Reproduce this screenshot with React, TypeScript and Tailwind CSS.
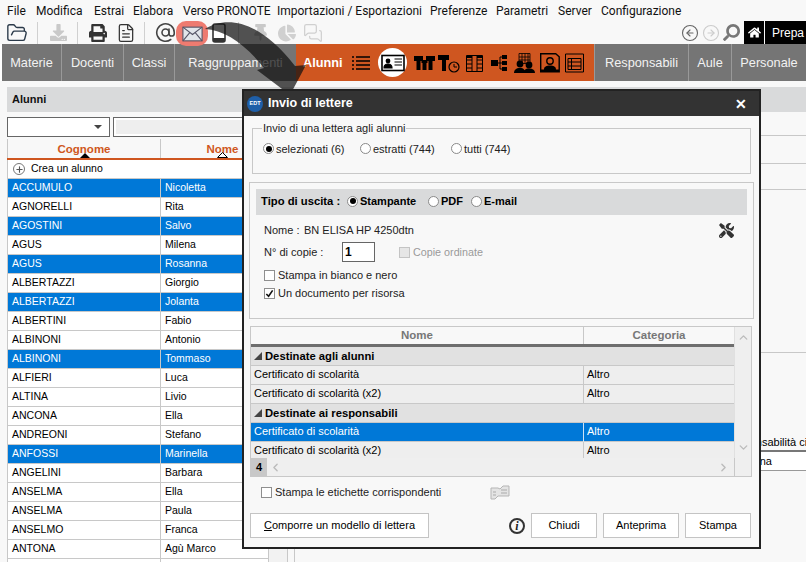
import { AtSign, ChevronDown, ChevronLeft, ChevronRight, ChevronUp, CircleArrowLeft, CircleArrowRight, FileText, FolderOpen, MessagesSquare, Plus } from "lucide-react";
import { FaChartPie, FaDownload, FaHome, FaPrint, FaSearch, FaThumbtack, FaTools } from "react-icons/fa";

const menus = [
  ["File", "w-[29px]"],
  ["Modifica", "w-[58px]"],
  ["Estrai", "w-[39px]"],
  ["Elabora", "w-[50px]"],
  ["Verso PRONOTE", "w-[94px]"],
  ["Importazioni / Esportazioni", "w-[153px]"],
  ["Preferenze", "w-[66px]"],
  ["Parametri", "w-[62px]"],
  ["Server", "w-[43px]"],
  ["Configurazione", "w-[90px]"],
];

const students = [
  ["ACCUMULO", "Nicoletta", true],
  ["AGNORELLI", "Rita", false],
  ["AGOSTINI", "Salvo", true],
  ["AGUS", "Milena", false],
  ["AGUS", "Rosanna", true],
  ["ALBERTAZZI", "Giorgio", false],
  ["ALBERTAZZI", "Jolanta", true],
  ["ALBERTINI", "Fabio", false],
  ["ALBINONI", "Antonio", false],
  ["ALBINONI", "Tommaso", true],
  ["ALFIERI", "Luca", false],
  ["ALTINA", "Livio", false],
  ["ANCONA", "Ella", false],
  ["ANDREONI", "Stefano", false],
  ["ANFOSSI", "Marinella", true],
  ["ANGELINI", "Barbara", false],
  ["ANSELMA", "Ella", false],
  ["ANSELMA", "Paula", false],
  ["ANSELMO", "Franca", false],
  ["ANTONA", "Agù Marco", false],
  ["", "", false],
] as const;

const Radio = ({ checked = false }: { checked?: boolean }) => (
  <span className="flex h-[11px] w-[11px] shrink-0 items-center justify-center rounded-full border border-[#8a8a8a] bg-white">
    {checked && <span className="h-[6px] w-[6px] rounded-full bg-black" />}
  </span>
);

const Check = ({ checked = false, disabled = false }: { checked?: boolean; disabled?: boolean }) => (
  <span className={`flex h-[11px] w-[11px] shrink-0 items-center justify-center border ${disabled ? "border-[#c4c4c4] bg-[#e6e6e6]" : "border-[#8f8f8f] bg-white"}`}>
    {checked && (
      <svg viewBox="0 0 10 10" className="h-[9px] w-[9px]">
        <path d="M1.5 5.5 L4 8 L8.5 1.5" fill="none" stroke="#111" strokeWidth="1.8" />
      </svg>
    )}
  </span>
);

const Sep = () => <span className="block h-[22px] w-px bg-[#d0d0d0]" />;

const TabIcon = ({ w, children }: { w: number; children: React.ReactNode }) => (
  <svg width={w} height="22" viewBox={`0 0 ${w} 22`} className="shrink-0">
    {children}
  </svg>
);

const OrangeIcons = () => (
  <div className="flex items-center">
    <TabIcon w={18}>
      <path d="M0 5h2M4 5h14M0 9h2M4 9h14M0 13h2M4 13h14M0 17h2M4 17h14" stroke="#000" strokeWidth="1.6" />
    </TabIcon>
    <span className="ml-[8px] flex h-[29px] w-[29px] items-center justify-center rounded-full bg-white">
      <svg width="24" height="18" viewBox="0 0 24 18">
        <rect x="1" y="1.5" width="22" height="15" fill="none" stroke="#000" strokeWidth="1.6" />
        <circle cx="7" cy="7" r="2.4" />
        <path d="M3 14c0-3 1.5-4 4-4s4 1 4 4zM13.5 5H21M13.5 8H21M13.5 11H21" stroke="#000" strokeWidth="1.2" />
      </svg>
    </span>
    <span className="ml-[7px]">
      <TabIcon w={21}>
        <path d="M0 4h9v5H6.5v9h-4V9H0zM12 4h9v5h-2.500v9h-4V9H12z" />
        <path d="M7.500 8h6v3h-1v7h-4v-7h-1z" />
      </TabIcon>
    </span>
    <span className="ml-[3px]">
      <TabIcon w={22}>
        <path d="M0 3h11v5H8v11H4V8H0z" />
        <circle cx="16" cy="15" r="5" fill="#cf5620" stroke="#000" strokeWidth="1.2" />
        <path d="M16 12v3h3" fill="none" stroke="#000" />
      </TabIcon>
    </span>
    <span className="ml-[6px]">
      <TabIcon w={17}>
        <path d="M.5 3.5h16v16H.5zM6 3.5v16M11 3.5v16M.5 8h5.500M.5 12h5.500M.5 16h5.500M11 8h5.500M11 12h5.500M11 16h5.500" fill="none" stroke="#000" />
        <path d="M1 3h5v3H1zM11 3h5v3h-5z" />
      </TabIcon>
    </span>
    <span className="ml-[8px]">
      <TabIcon w={17}>
        <path d="M0 8h7v6H0zM11 3h5v4h-5zM11 9h5v4h-5zM11 15h5v4h-5z" />
        <path d="M7 11h2M9 5v12M9 5h2M9 11h2M9 17h2" stroke="#000" fill="none" />
      </TabIcon>
    </span>
    <span className="ml-[6px]">
      <TabIcon w={21}>
        <path d="M5 1.500h11v10H5zM8 1.500v10M11 1.500v10M14 1.500v10M5 5h11M5 8h11" fill="none" stroke="#000" strokeWidth=".8" />
        <circle cx="6" cy="12" r="3.400" />
        <circle cx="15" cy="13" r="3.400" />
        <path d="M0 21c0-3 2-5 6-5s5 2 5 5zM10 21c0-3 1-4.500 5-4.500s6 1.500 6 4.500z" />
      </TabIcon>
    </span>
    <span className="ml-[5px]">
      <TabIcon w={20}>
        <path d="M.7 1.700h15l3.500 3v15H.7z" fill="none" stroke="#000" strokeWidth="1.400" />
        <circle cx="10" cy="9" r="3.200" fill="none" stroke="#000" strokeWidth="1.400" />
        <path d="M1 20v-2.500h18V20zM4 17.500c0-3 2.500-4 6-4s6 1 6 4z" />
      </TabIcon>
    </span>
    <span className="ml-[5px]">
      <TabIcon w={19}>
        <path d="M.5 2h18v18H.5zM3 6.500h13v11H3zM3 10h13M3 14h13M6.500 6.500v11" fill="none" stroke="#000" />
      </TabIcon>
    </span>
  </div>
);

const DialogButton = ({ label, className }: { label: React.ReactNode; className: string }) => (
  <button className={`flex h-[25px] items-center justify-center border border-[#c4c4c4] bg-white text-[11px] text-black ${className}`}>{label}</button>
);

const ModelRow = ({ name, selected = false }: { name: string; selected?: boolean }) => (
  <div className={`flex h-[19px] items-center border-b border-[#c8c8c8] pb-[2px] ${selected ? "bg-[#0078d7] text-white" : "bg-[#eeeeee] text-black"}`}>
    <span className="w-[332px] pl-[3px]">{name}</span>
    <span className={`-mb-[2px] flex h-[19px] flex-1 items-center border-l pb-[2px] pl-[3px] ${selected ? "border-[#cfe3f5]" : "border-[#c8c8c8]"}`}>Altro</span>
  </div>
);

const GroupRow = ({ name }: { name: string }) => (
  <div className="flex h-[19px] items-center border-b border-[#c8c8c8] bg-[#e1e1e1] pl-[3px] text-[11.250px] font-bold text-black">
    <span className="mr-[3px] h-0 w-0 border-b-[8px] border-l-[8px] border-b-[#444] border-l-transparent" />
    {name}
  </div>
);

const Dialog = () => (
  <div className="absolute left-[242px] top-[89px] flex h-[460px] w-[519px] flex-col border-2 border-[#222] bg-[#f8f8f8] text-[11px] text-[#222]">
    <div className="flex h-[25px] shrink-0 items-center bg-[#333333] pl-[3px] pr-[12px] text-white">
      <span className="flex h-[16px] w-[16px] items-center justify-center rounded-full bg-[#1f5fa8] text-[5.500px] font-bold">EDT</span>
      <span className="ml-[5px] flex-1 text-[12.500px] font-bold">Invio di lettere</span>
      <span className="text-[14px] font-bold leading-none">✕</span>
    </div>

    <fieldset className="mx-[8px] mt-[4px] h-[54px] shrink-0 border border-[#c8c8c8] pl-[10px]">
      <legend className="-ml-[1px] px-[1px]">Invio di una lettera agli alunni</legend>
      <div className="mt-[4px] flex items-center">
        <Radio checked />
        <span className="ml-[2px] w-[84px]">selezionati (6)</span>
        <Radio />
        <span className="ml-[2px] w-[78px]">estratti (744)</span>
        <Radio />
        <span className="ml-[2px]">tutti (744)</span>
      </div>
    </fieldset>

    <div className="mx-[5px] mt-[8px] h-[137px] shrink-0 border border-[#c8c8c8] px-[6px] pt-[6px]">
      <div className="flex h-[26px] items-center bg-[#d9dadb] pb-[2px] pl-[5px] font-bold text-black">
        <span className="w-[86px] text-[11.250px]">Tipo di uscita :</span>
        <Radio checked />
        <span className="ml-[2px] w-[68px]">Stampante</span>
        <Radio />
        <span className="ml-[2px] w-[30px]">PDF</span>
        <Radio />
        <span className="ml-[2px]">E-mail</span>
      </div>
      <div className="flex h-[27px] items-center justify-between pl-[8px] pr-[13px] pt-[4px]">
        <span className="flex">
          <span className="w-[40px]">Nome :</span>
          <span>BN ELISA HP 4250dtn</span>
        </span>
        <FaTools className="h-[15px] w-[15px] text-[#333]" />
      </div>
      <div className="flex h-[20px] items-center pl-[8px]">
        <span className="w-[78px]">N° di copie :</span>
        <span className="flex h-[20px] w-[33px] items-center border border-[#666] bg-white pl-[2px] text-[12px] font-bold text-black">1</span>
        <span className="ml-[24px]">
          <Check disabled />
        </span>
        <span className="ml-[3px] text-[10.750px] text-[#9a9a9a]">Copie ordinate</span>
      </div>
      <div className="mt-[7px] flex h-[13px] items-center pl-[8px]">
        <Check />
        <span className="ml-[3px]">Stampa in bianco e nero</span>
      </div>
      <div className="mt-[5px] flex h-[13px] items-center pl-[8px]">
        <Check checked />
        <span className="ml-[3px]">Un documento per risorsa</span>
      </div>
    </div>

    <div className="ml-[6px] mr-[7px] mt-[7px] flex h-[151px] shrink-0 flex-col border border-[#c8c8c8]">
      <div className="flex min-h-0 flex-1">
        <div className="flex-1">
          <div className="flex h-[20px] border-b-[3px] border-[#6e6e6e] bg-[#f8f8f8] text-[11.500px] font-bold text-[#777]">
            <span className="w-[332px] text-center">Nome</span>
            <span className="flex-1 border-l border-[#c8c8c8] text-center">Categoria</span>
          </div>
          <GroupRow name="Destinate agli alunni" />
          <ModelRow name="Certificato di scolarità" />
          <ModelRow name="Certificato di scolarità (x2)" />
          <GroupRow name="Destinate ai responsabili" />
          <ModelRow name="Certificato di scolarità" selected />
          <ModelRow name="Certificato di scolarità (x2)" />
        </div>
        <div className="flex w-[17px] flex-col items-center justify-between border-l border-[#e0e0e0] bg-[#efefef] py-[4px] text-[#bbb]">
          <ChevronUp size={13} strokeWidth={2.5} />
          <ChevronDown size={13} strokeWidth={2.5} />
        </div>
      </div>
      <div className="flex h-[18px] shrink-0 items-center bg-[#efefef] text-[#bbb]">
        <span className="flex h-full w-[16px] items-center justify-center bg-[#c8c8c8] font-bold text-black">4</span>
        <ChevronLeft size={13} strokeWidth={2.5} className="ml-[2px]" />
        <span className="flex-1" />
        <ChevronRight size={13} strokeWidth={2.5} className="mr-[4px]" />
        <span className="h-full w-[17px] border-l border-[#c8c8c8]" />
      </div>
    </div>

    <div className="mt-[7px] flex h-[16px] shrink-0 items-center pl-[17px]">
      <Check />
      <span className="ml-[3px] w-[215px]">Stampa le etichette corrispondenti</span>
      <svg width="20" height="15" viewBox="0 0 20 15">
        <path d="M1 3h7l2 1 3-3h6v10H8l-3 3H1z" fill="#e4e4e4" stroke="#b5b5b5" />
        <path d="M3 7h3M3 10h3M11 5h6M11 8h6" stroke="#aaa" />
      </svg>
    </div>

    <div className="mt-[13px] flex shrink-0 items-center pl-[6px] pr-[8px]">
      <DialogButton
        className="w-[179px]"
        label={
          <span>
            <span className="underline">C</span>omporre un modello di lettera
          </span>
        }
      />
      <span className="ml-[80px] flex h-[16px] w-[16px] items-center justify-center rounded-full border-2 border-[#333] font-['Liberation_Serif',serif] text-[12px] font-bold italic text-[#222]">i</span>
      <DialogButton className="ml-[6px] w-[66px]" label="Chiudi" />
      <DialogButton className="ml-[6px] w-[76px]" label="Anteprima" />
      <DialogButton className="ml-[6px] w-[66px]" label="Stampa" />
    </div>
  </div>
);

export default function App() {
  return (
    <div className="relative flex h-[562px] w-[806px] flex-col overflow-hidden bg-[#f8f8f8] font-['Liberation_Sans',Arial,sans-serif] text-black">
      <nav className="flex h-[21px] shrink-0 items-center pl-[7px] font-['Roboto',sans-serif] text-[12px] text-[#111]">
        {menus.map(([label, width]) => (
          <span key={label} className={`${width} whitespace-nowrap`}>
            {label}
          </span>
        ))}
      </nav>

      <div className="flex h-[23px] shrink-0 items-center">
        <FolderOpen size={22} strokeWidth={1.5} className="ml-[6px] text-[#2b3a4a]" />
        <span className="ml-[9px]"><Sep /></span>
        <FaDownload className="ml-[11px] h-[17px] w-[19px] text-[#c9c9c9]" />
        <span className="ml-[9px]"><Sep /></span>
        <FaPrint className="ml-[11px] h-[18px] w-[18px] text-[#333]" />
        <FileText size={20} strokeWidth={1.5} className="ml-[9px] text-[#333]" />
        <span className="ml-[8px]"><Sep /></span>
        <AtSign size={21} strokeWidth={1.8} className="ml-[10px] text-[#444]" />
        <span className="flex h-[25px] w-[32px] translate-y-[1px] items-center justify-center rounded-[10px] bg-[#ee7b70]">
          <svg width="21" height="16" viewBox="0 0 23 17">
            <rect x="1" y="1" width="21" height="15" fill="#e2e6ea" stroke="#556" strokeWidth="1.200" />
            <path d="M1 1 L11.500 9 L22 1 M1 16 L8.500 7 M22 16 L14.500 7" fill="none" stroke="#556" strokeWidth="1.200" />
          </svg>
        </span>
        <svg width="14" height="20" viewBox="0 0 14 20" className="ml-[4px]">
          <rect x="1" y="1" width="12" height="18" rx="2" fill="#fff" stroke="#333" strokeWidth="1.600" />
          <path d="M1 15h12v4H1z" fill="#333" />
        </svg>
        <span className="ml-[12px]"><Sep /></span>
        <FaThumbtack className="ml-[14px] h-[17px] w-[15px] text-[#c9c9c9]" />
        <FaChartPie className="ml-[10px] h-[18px] w-[18px] text-[#d0d0d0]" />
        <MessagesSquare size={20} strokeWidth={1.5} className="ml-[7px] text-[#d0d0d0]" />
        <CircleArrowLeft size={18} strokeWidth={1.5} className="ml-[358px] text-[#666]" />
        <CircleArrowRight size={18} strokeWidth={1.5} className="ml-[3px] text-[#ccc]" />
        <FaSearch className="ml-[3px] h-[17px] w-[17px] -scale-x-100 text-[#777]" />
        <span className="ml-[4px] flex h-[23px] w-[20px] items-center justify-center bg-black">
          <FaHome className="h-[13px] w-[13px] text-white" />
        </span>
        <span className="ml-px flex h-[23px] flex-1 items-center overflow-hidden bg-black pl-[7px] text-[12px] text-white">Prepa</span>
      </div>

      <div className="flex h-[37px] shrink-0 bg-white pl-[2px] text-[12.750px] text-[#f2f2f2]">
        <span className="flex w-[60px] items-center justify-center border-r border-[#999] bg-[#757575]">Materie</span>
        <span className="flex w-[62px] items-center justify-center border-r border-[#999] bg-[#757575]">Docenti</span>
        <span className="flex w-[51px] items-center justify-center border-r border-[#999] bg-[#757575]">Classi</span>
        <span className="flex w-[121px] items-center justify-center bg-[#757575]">Raggruppamenti</span>
        <div className="flex w-[298px] items-center bg-[#cf5620] pl-[7px]">
          <span className="mr-[8px] w-[41px] font-bold text-white">Alunni</span>
          <OrangeIcons />
        </div>
        <span className="flex w-[95px] items-center justify-center border-x border-[#999] bg-[#757575]">Responsabili</span>
        <span className="flex w-[43px] items-center justify-center border-r border-[#999] bg-[#757575]">Aule</span>
        <span className="flex flex-1 items-center justify-center bg-[#757575]">Personale</span>
      </div>

      <div className="mt-[6px] ml-[7px] flex h-[25px] shrink-0 items-center bg-[#d9dadb] pl-[5px] text-[11px] font-bold text-[#111]">Alunni</div>

      <div className="flex min-h-0 flex-1">
        <div className="ml-[7px] w-[261px] shrink-0">
          <div className="mt-[5px] flex h-[20px] gap-[3px]">
            <span className="flex w-[103px] items-center justify-end border border-[#666] bg-white pr-[7px]">
              <span className="h-0 w-0 border-x-[4px] border-t-[4px] border-x-transparent border-t-[#444]" />
            </span>
            <span className="flex-1 border border-[#666] bg-white p-[2px]">
              <span className="block h-full bg-[#eeeeee]" />
            </span>
          </div>

          <div className="mt-[2px] flex h-[21px] border-b-2 border-[#cf5620] bg-[#f8f8f8] text-[11.500px] font-bold text-[#cf5620]">
            <span className="relative w-[154px] shrink-0 border-l border-r border-[#c8c8c8] text-center leading-[20px]">
              Cognome
              <span className="absolute bottom-0 left-[72px] h-0 w-0 border-x-[5px] border-b-[5px] border-x-transparent border-b-black" />
            </span>
            <span className="relative w-[107px] shrink-0 pl-[16px] text-center leading-[20px]">
              Nome
              <svg width="11" height="6" viewBox="0 0 11 6" className="absolute bottom-0 left-[56px]">
                <path d="M.5 5.500 L5.500 .5 L10.500 5.500 Z" fill="#fff" stroke="#000" />
              </svg>
            </span>
          </div>

          <div className="flex h-[19px] items-center border-b border-l border-[#c8c8c8] bg-white pl-[5px] text-[10.500px]">
            <span className="flex h-[12px] w-[12px] items-center justify-center rounded-full border border-[#777] text-[#555]">
              <Plus size={9} strokeWidth={3} />
            </span>
            <span className="ml-[6px]">Crea un alunno</span>
          </div>

          {students.map(([last, first, selected], i) => (
            <div key={i} className={`flex h-[19px] items-center border-b border-l border-[#c8c8c8] text-[10.500px] ${selected ? "bg-[#0078d7] text-white" : "bg-white text-black"}`}>
              <span className="w-[152px] pl-[4px]">{last}</span>
              <span className="flex h-full flex-1 items-center border-l border-[#c8c8c8] pl-[4px]">{first}</span>
            </div>
          ))}
        </div>

        <div className="w-[19px] shrink-0 border-l border-[#c8c8c8] bg-[#f2f2f2]" />
        <div className="w-[8px] shrink-0 border-x border-[#c8c8c8]" />

        <div className="min-w-0 flex-1 overflow-hidden text-[11px]">
          <div className="mt-[23px] h-px bg-[#c8c8c8]" />
          <div className="mt-[27px] h-px bg-[#c8c8c8]" />
          <div className="mt-[25px] h-px bg-[#c8c8c8]" />
          <div className="mt-[162px] h-px bg-[#c8c8c8]" />
          <div className="mt-[81px] flex h-[18px] items-center whitespace-nowrap border-b-2 border-[#777] pl-[429px]">Responsabilità civile</div>
          <div className="flex h-[19px] items-center whitespace-nowrap border-b border-[#999] bg-white pl-[436px]">Persona</div>
        </div>
      </div>

      <svg width="806" height="562" viewBox="0 0 806 562" className="pointer-events-none absolute left-0 top-0">
        <path d="M205 29 C 225 16, 258 18, 295 66 L306 65 L290 95 L257 70 L264 68 C 245 44, 225 30, 205 29 Z" fill="#111" fillOpacity="0.72" />
      </svg>

      <Dialog />
    </div>
  );
}
